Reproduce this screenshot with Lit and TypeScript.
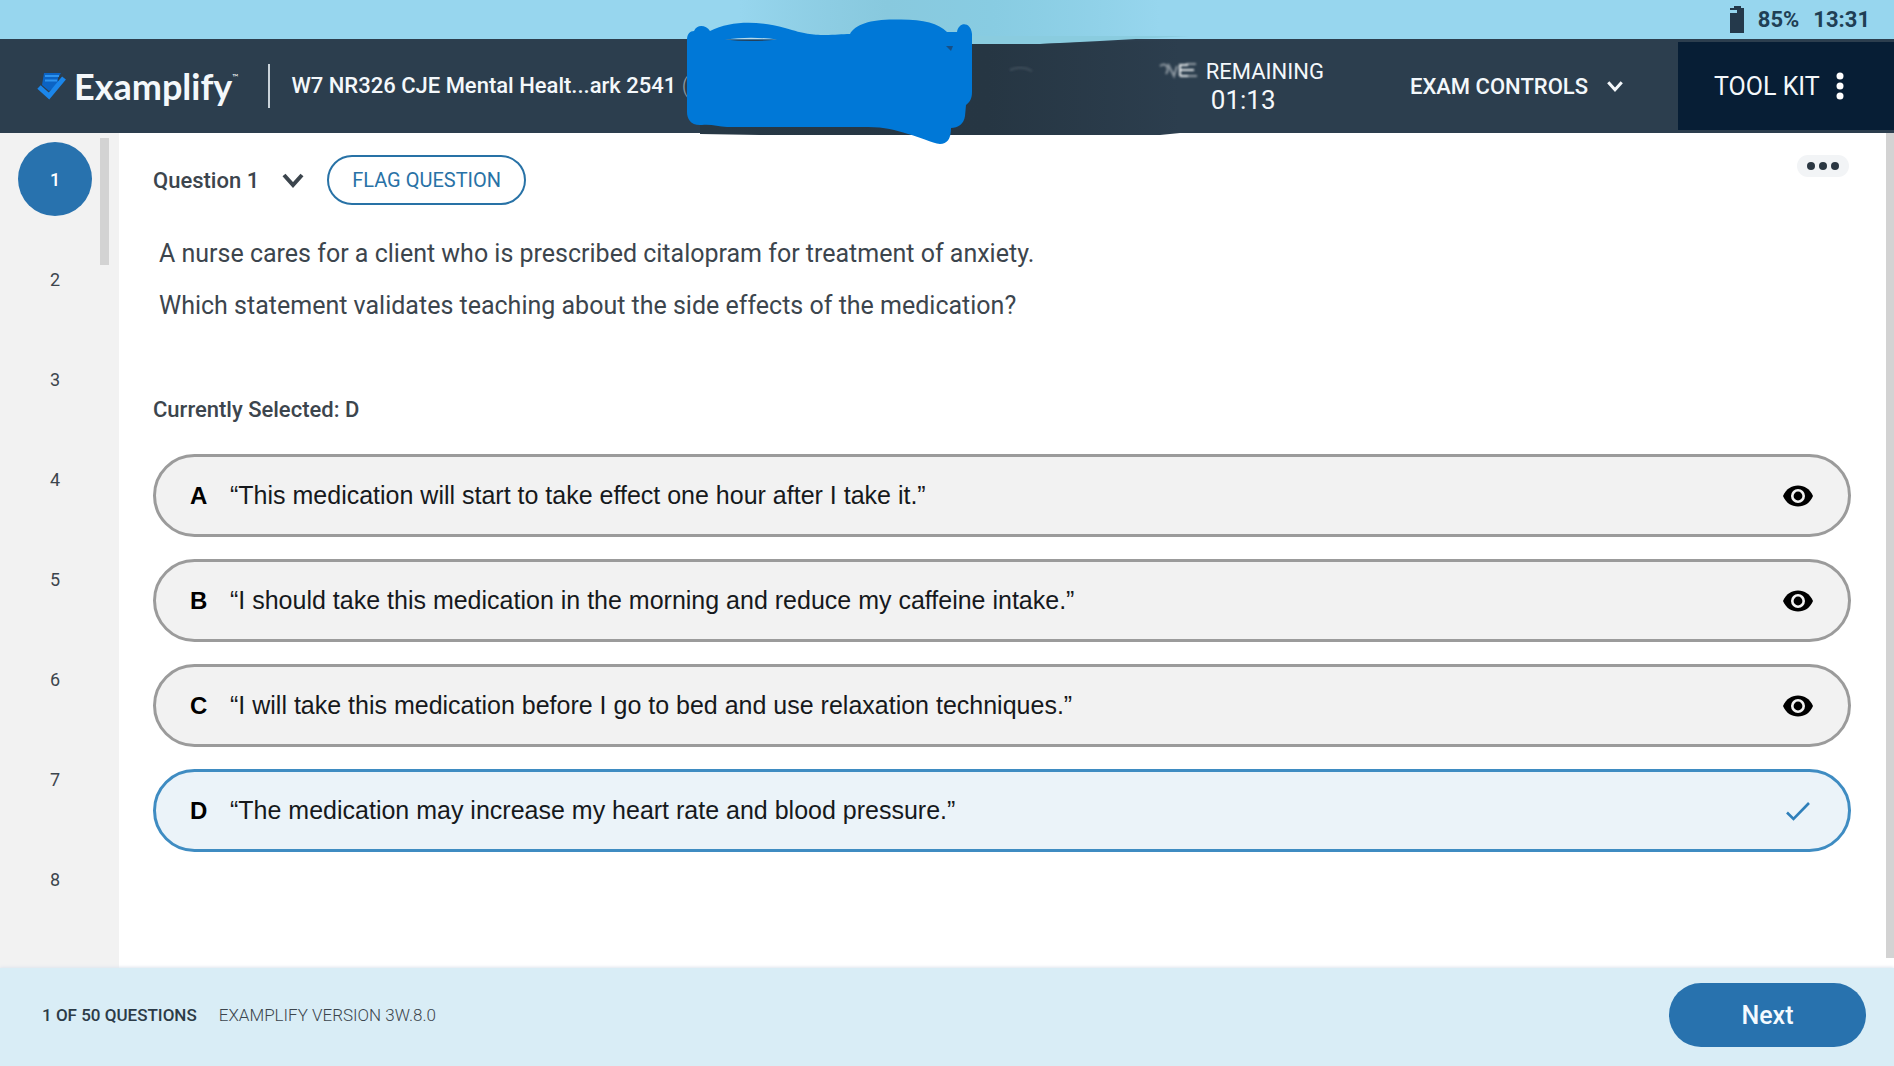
import { LitElement, html, css, svg } from "lit";
import { customElement, state } from "lit/decorators.js";
import { classMap } from "lit/directives/class-map.js";

interface Choice {
  key: string;
  text: string;
}

const CHOICES: Choice[] = [
  { key: "A", text: "“This medication will start to take effect one hour after I take it.”" },
  { key: "B", text: "“I should take this medication in the morning and reduce my caffeine intake.”" },
  { key: "C", text: "“I will take this medication before I go to bed and use relaxation techniques.”" },
  { key: "D", text: "“The medication may increase my heart rate and blood pressure.”" },
];

const chevron = (size: number, weight: number) => html`
  <svg width=${size} height=${size} viewBox="0 0 24 24" fill="none" stroke="currentColor" stroke-width=${weight} aria-hidden="true">
    <path d="M3 7 L12 17 L21 7" />
  </svg>
`;

const eye = html`
  <svg width="32" height="32" viewBox="0 0 32 32" aria-hidden="true">
    <path d="M1 16 C4 9 9.500 5.500 16 5.500 S28 9 31 16 C28 23 22.500 26.500 16 26.500 S4 23 1 16Z" fill="#000" />
    <circle cx="16" cy="16" r="5.700" fill="#000" stroke="#f2f2f2" stroke-width="2.600" />
  </svg>
`;

const check = html`
  <svg width="32" height="32" viewBox="0 0 32 32" fill="none" stroke="#2f7fba" stroke-width="2.600" aria-hidden="true">
    <path d="M5 17.500 L11.500 24 L27 8" />
  </svg>
`;

@customElement("app-root")
export class AppRoot extends LitElement {
  @state() private selected = "D";
  @state() private current = 1;

  static styles = css`
    :host {
      display: flex;
      flex-direction: column;
      min-height: 100vh;
      position: relative;
      background: #fff;
      color: #3c454d;
      font-family: Roboto, "Liberation Sans", sans-serif;
      font-size: 20px;
    }
    * {
      box-sizing: border-box;
    }
    button {
      font: inherit;
      color: inherit;
      background: none;
      border: 0;
      padding: 0;
      cursor: pointer;
    }
    svg {
      display: block;
      flex: none;
    }
    .status {
      display: flex;
      align-items: center;
      justify-content: flex-end;
      gap: 14px;
      height: 39px;
      padding: 0 24px 0 0;
      background: #97d6ee;
      color: #1f3f55;
      font-size: 22px;
      font-weight: 700;
    }
    .header {
      display: flex;
      align-items: stretch;
      height: 94px;
      background: #2c3e4e;
      color: #f4f8fb;
    }
    .brand {
      display: flex;
      align-items: center;
      gap: 8px;
      padding-left: 37px;
    }
    .wordmark {
      font-family: Lato, "Liberation Sans", sans-serif;
      font-size: 36px;
      font-weight: 700;
      line-height: 44px;
    }
    .tm {
      font-size: 8px;
      font-weight: 400;
      line-height: 0;
      vertical-align: 20px;
    }
    .title {
      align-self: center;
      margin: 0 auto 0 30px;
      padding: 8px 0 8px 21px;
      border-left: 2px solid #c9d2d9;
      font-size: 22px;
      line-height: 28px;
      font-weight: 500;
    }
    .paren {
      color: #8f9aa2;
      font-weight: 300;
    }
    .timer {
      display: flex;
      flex-direction: column;
      justify-content: center;
      margin-right: 86px;
      font-size: 22px;
      line-height: 28px;
    }
    .clock {
      padding-left: 5px;
      font-size: 26px;
    }
    .controls {
      display: flex;
      align-items: center;
      gap: 18px;
      margin-right: 54px;
      font-size: 22px;
      font-weight: 500;
    }
    .toolkit {
      display: flex;
      align-items: center;
      gap: 16px;
      width: 216px;
      margin: 3px 0;
      padding-left: 36px;
      background: #071e35;
      font-size: 25px;
      font-weight: 400;
    }
    .body {
      display: flex;
      flex: 1;
    }
    .rail {
      display: flex;
      gap: 8px;
      width: 119px;
      padding-left: 18px;
      background: #f2f2f2;
    }
    .numbers {
      display: flex;
      flex-direction: column;
      gap: 26px;
      margin: 0;
      padding: 9px 0 0;
      list-style: none;
    }
    .number {
      width: 74px;
      height: 74px;
      border-radius: 50%;
      font-size: 18px;
    }
    .number.active {
      background: #2872ae;
      color: #fff;
      font-weight: 500;
    }
    .thumb {
      width: 9px;
      height: 127px;
      margin-top: 5px;
      background: #d3d3d3;
    }
    .main {
      flex: 1;
      padding: 22px 35px 22px 34px;
    }
    .toolbar {
      display: flex;
      align-items: center;
      height: 50px;
    }
    .question {
      display: flex;
      align-items: center;
      gap: 22px;
      font-size: 22px;
      font-weight: 500;
    }
    .flag {
      height: 50px;
      margin-left: 22px;
      padding: 0 23px;
      border: 2px solid #2872a6;
      border-radius: 25px;
      color: #2872a6;
    }
    .more {
      display: flex;
      align-items: center;
      justify-content: center;
      align-self: flex-start;
      width: 52px;
      height: 22px;
      margin: 0 2px 0 auto;
      border-radius: 11px;
      background: #f2f4f6;
    }
    .prompt {
      padding: 23px 0 0 6px;
      font-size: 25px;
      line-height: 52px;
    }
    .prompt p {
      margin: 0;
    }
    .current {
      margin: 64px 0 30px;
      font-size: 22px;
      font-weight: 500;
      line-height: 28px;
    }
    .choices {
      display: flex;
      flex-direction: column;
      gap: 22px;
      margin: 0;
      padding: 0;
      border: 0;
    }
    .choice {
      display: flex;
      align-items: center;
      height: 83px;
      padding-right: 34px;
      border: 3px solid #9b9b9b;
      border-radius: 42px;
      background: #f2f2f2;
      color: #16191c;
      font-family: "Liberation Sans", Arial, sans-serif;
      font-size: 25px;
    }
    .choice.selected {
      border-color: #3f8cc2;
      background: #ebf3f9;
    }
    .pick {
      display: flex;
      align-items: center;
      flex: 1;
      align-self: stretch;
      padding-left: 34px;
      cursor: pointer;
    }
    .radio {
      appearance: none;
      width: 0;
      height: 0;
      margin: 0;
    }
    .letter {
      width: 40px;
      color: #000;
      font-size: 24px;
      font-weight: 700;
    }
    .scroll {
      width: 8px;
      margin-bottom: 10px;
      background: #d3d3d3;
    }
    .footer {
      display: flex;
      align-items: center;
      gap: 22px;
      height: 98px;
      padding: 0 28px 4px 42px;
      background: #d9edf6;
      box-shadow: 0 -1px 3px #dfe5ee;
      font-size: 17px;
    }
    .count {
      font-weight: 500;
      color: #2c3b47;
    }
    .version {
      font-weight: 300;
    }
    .next {
      width: 197px;
      height: 64px;
      margin-left: auto;
      border-radius: 32px;
      background: #2872ae;
      color: #f4faff;
      font-size: 25px;
      font-weight: 500;
    }
    .scribble {
      position: absolute;
      top: 0;
      left: 680px;
      pointer-events: none;
    }
  `;

  private renderScribble() {
    return svg`
      <svg class="scribble" width="540" height="160" viewBox="680 0 540 160" aria-hidden="true">
        <defs>
          <filter id="soft" x="-20%" y="-40%" width="140%" height="180%"><feGaussianBlur stdDeviation="1" /></filter>
          <linearGradient id="sky" x1="0" x2="1">
            <stop offset="0" stop-color="#84c4d9" stop-opacity="0" />
            <stop offset="0.350" stop-color="#88c9de" />
            <stop offset="0.600" stop-color="#88cce2" />
            <stop offset="1" stop-color="#84c9de" stop-opacity="0" />
          </linearGradient>
          <linearGradient id="smear" x1="0" x2="1">
            <stop offset="0" stop-color="#273845" />
            <stop offset="0.600" stop-color="#263643" />
            <stop offset="1" stop-color="#2c3e4e" />
          </linearGradient>
        </defs>
        <rect x="740" y="0" width="420" height="39" fill="url(#sky)" />
        <path d="M960 36 H1190 L1100 41 L1040 44 H960Z" fill="#8accdf" />
        <path d="M960 44 H1040 L1100 42 L1180 40 V133 L1160 135 H900 L760 135 L700 134 V124 H960Z" fill="url(#smear)" />
        <path d="M1010 70 Q1022 65 1032 71" stroke="#41505c" stroke-width="2" fill="none" filter="url(#soft)" />
        <g stroke="#b9c0c6" stroke-width="2" fill="none" filter="url(#soft)">
          <path d="M1160 66 C1166 62 1170 68 1166 74 M1168 64 L1174 76 L1177 66 M1186 64 H1196 M1188 76 H1197" opacity="0.700" />
          <path d="M1180 64 V76 M1180 65 H1188 M1180 70 H1194 M1180 76 H1188" stroke="#e4e8ea" />
        </g>
        <path
          fill="#0078d7"
          d="M687 40 C687 34 690 31 694 31 C697 24 706 25 710 31 C732 20 760 21 785 28 C805 34 812 35 825 35 C835 35 842 34 850 34 C855 24 872 19 897 19.500 C922 19 938 23 947 32 L957 32 C959 21 971 22 972 34 V92 C972 98 970 102 966 105 L965 116 C964 124 958 128 951 128 C951 139 947 144 940 144 C932 143 920 137 908 134 C895 130 885 127 868 127 H727 C718 127 712 124 702 125 C691 126 687 119 687 112Z"
        />
        <path d="M725 39.500 Q751 36 777 39.500Z" fill="#b8dcec" />
        <path d="M725 39.500 H777 Q751 42.500 725 39.500Z" fill="#24405a" />
        <path d="M946 46 L953 46 L951 51Z" fill="#174f86" />
      </svg>
    `;
  }

  render() {
    return html`
      <div class="status">
        <svg width="14" height="27" viewBox="0 0 14 27" aria-hidden="true">
          <path d="M4 0 H11 V2 H14 V27 H0 V7 H7 V4 H0 V2 H4Z" fill="#24394b" />
        </svg>
        <span>85%</span>
        <span>13:31</span>
      </div>

      <header class="header">
        <div class="brand">
          <svg width="29" height="28" viewBox="0 0 29 28" aria-hidden="true">
            <path d="M7 1 H24 L21 6 V13 L12 19 L5 13Z" fill="#0b63c4" />
            <path d="M8 4 H22 M8 8.500 H20" stroke="#2e93ee" stroke-width="2" />
            <path d="M2 15 L12 24 L27 6" fill="none" stroke="#1b86ea" stroke-width="5" />
          </svg>
          <span class="wordmark">Examplify<span class="tm">™</span></span>
        </div>
        <div class="title">W7 NR326 CJE Mental Healt...ark 2541 <span class="paren">(</span></div>
        <div class="timer"><span>REMAINING</span><span class="clock">01:13</span></div>
        <button class="controls" type="button">EXAM CONTROLS ${chevron(18, 4)}</button>
        <button class="toolkit" type="button">
          TOOL KIT
          <svg width="8" height="28" viewBox="0 0 8 28" fill="#fff" aria-hidden="true">
            <circle cx="4" cy="4" r="3.500" /><circle cx="4" cy="14" r="3.500" /><circle cx="4" cy="24" r="3.500" />
          </svg>
        </button>
      </header>

      <div class="body">
        <nav class="rail" aria-label="Questions">
          <ol class="numbers">
            ${[1, 2, 3, 4, 5, 6, 7, 8].map(
              (n) => html`<li>
                <button
                  type="button"
                  class=${classMap({ number: true, active: n === this.current })}
                  @click=${() => (this.current = n)}
                >${n}</button>
              </li>`
            )}
          </ol>
          <div class="thumb"></div>
        </nav>

        <main class="main">
          <div class="toolbar">
            <button class="question" type="button">Question ${this.current} ${chevron(24, 4)}</button>
            <button class="flag" type="button">FLAG QUESTION</button>
            <button class="more" type="button" aria-label="More">
              <svg width="34" height="10" viewBox="0 0 34 10" fill="#2b3742" aria-hidden="true">
                <circle cx="5" cy="5" r="4" /><circle cx="17" cy="5" r="4" /><circle cx="29" cy="5" r="4" />
              </svg>
            </button>
          </div>
          <div class="prompt">
            <p>A nurse cares for a client who is prescribed citalopram for treatment of anxiety.</p>
            <p>Which statement validates teaching about the side effects of the medication?</p>
          </div>
          <div class="current">Currently Selected: ${this.selected}</div>
          <fieldset class="choices" aria-label="Answers">
            ${CHOICES.map((c) => {
              const on = c.key === this.selected;
              return html`<div class=${classMap({ choice: true, selected: on })}>
                <label class="pick" for="choice-${c.key}">
                  <input
                    class="radio"
                    type="radio"
                    name="answer"
                    id="choice-${c.key}"
                    .checked=${on}
                    @change=${() => (this.selected = c.key)}
                  />
                  <span class="letter">${c.key}</span>
                  <span>${c.text}</span>
                </label>
                ${on ? check : html`<button type="button" aria-label="Hide answer ${c.key}">${eye}</button>`}
              </div>`;
            })}
          </fieldset>
        </main>
        <div class="scroll"></div>
      </div>

      <footer class="footer">
        <span class="count">1 OF 50 QUESTIONS</span>
        <span class="version">EXAMPLIFY VERSION 3W.8.0</span>
        <button class="next" type="button">Next</button>
      </footer>

      ${this.renderScribble()}
    `;
  }
}
